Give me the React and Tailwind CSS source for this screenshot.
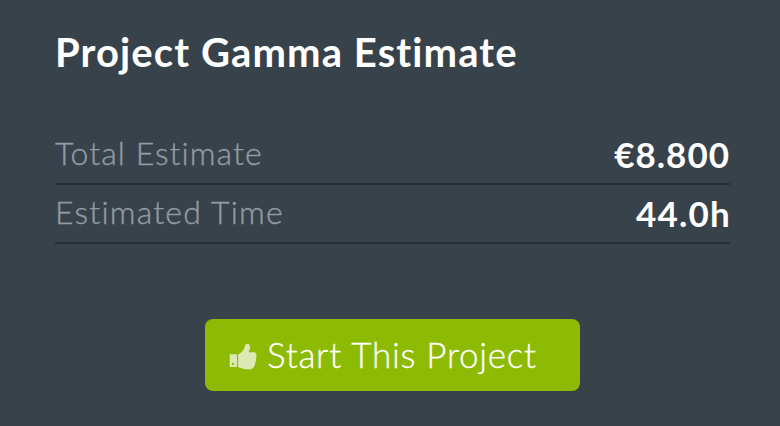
const rows = [
  { label: 'Total Estimate', value: '€8.800', labelClass: 'tracking-[1.05px]', valueClass: 'tracking-[1px]' },
  { label: 'Estimated Time', value: '44.0h', labelClass: 'tracking-[1.2px]', valueClass: 'tracking-[1.2px] -mr-px' },
];

const ThumbsUp = () => (
  <svg width="28" height="28" viewBox="0 0 28 28" fill="#dce9b2" className="mt-1 shrink-0">
    <path
      fillRule="evenodd"
      d="M1.5 11.2H7.2Q8 11.2 8 12V23.2Q8 24 7.2 24H1.5Q.7 24 .7 23.2V12Q.7 11.2 1.5 11.2ZM4 19.7a1.2 1.2 0 1 0 0 2.4a1.2 1.2 0 0 0 0-2.4Z"
    />
    <path d="M9.1 12.2Q9.1 11.2 10 10.9C12.2 10 14.2 7.7 15.2 5.6C16 3.9 15.9.7 18.2.7C20.2.7 21.2 2.5 21 4.7C20.9 6.5 19.9 8 19.8 9.3H24.6C26.3 9.3 27.4 10.4 27.4 12C27.4 15.3 26.5 20.6 25.2 23.5C24.3 25.7 22.6 26.3 20 26.3C16.5 26.3 13.2 25.8 10 24.5Q9.1 24.2 9.1 23.2Z" />
  </svg>
);

const App = () => {
  return (
    <div className="h-screen w-full overflow-hidden bg-[#38424b] px-[55px] pt-7 font-['Lato',sans-serif] text-white">
      <h1 className="h-12 whitespace-nowrap text-[40px] font-bold leading-[48px] tracking-[1.1px]">
        Project Gamma Estimate
      </h1>

      <div className="mt-[50px] w-[675px]">
        {rows.map((row) => (
          <div key={row.label} className="flex h-[59px] items-center justify-between border-b-2 border-[#282e35]">
            <span
              className={`pb-[3px] text-[32px] font-light leading-none text-[#939aa1] [-webkit-text-stroke:0.4px_#939aa1] ${row.labelClass}`}
            >
              {row.label}
            </span>
            <span className={`text-[35px] font-bold leading-none ${row.valueClass}`}>{row.value}</span>
          </div>
        ))}
      </div>

      <button className="ml-[150px] mt-[75px] flex h-[72px] w-[375px] items-center rounded-lg bg-[#8dbb04] pl-6">
        <ThumbsUp />
        <span className="ml-[10px] whitespace-nowrap pb-px text-[35px] font-light leading-none tracking-[0.75px] [-webkit-text-stroke:0.3px_#fff]">
          Start This Project
        </span>
      </button>
    </div>
  );
};

export default App;
